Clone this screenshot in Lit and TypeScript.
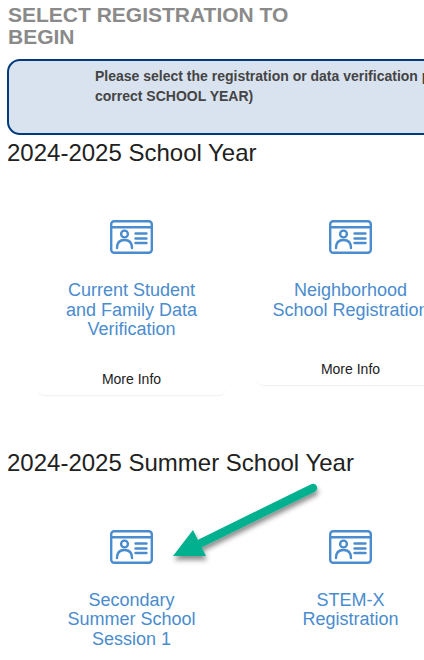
import { LitElement, html, css, svg } from "lit";
import { customElement } from "lit/decorators.js";

const idIcon = html`<svg class="icon" viewBox="0 0 43 34" fill="none" stroke="#4a8cce" stroke-width="2.4" stroke-linecap="round">
  ${svg`<rect x="1.2" y="1.2" width="40.6" height="31.6" rx="3"/>
  <path d="M1.2 7.2H41.8"/>
  <circle cx="14.5" cy="14" r="3.4"/>
  <path d="M7 28c0-5.5 3.2-8 7.5-8s7.5 2.5 7.5 8"/>
  <path d="M25.5 13.5H36.5M25.5 18.5H36.5M25.5 23H36.5"/>`}
</svg>`;

const card = (title: unknown) => html`<div class="card">
  ${idIcon}
  <div class="name">${title}</div>
  <div class="more">More Info</div>
</div>`;

@customElement("app-root")
export class AppRoot extends LitElement {
  static styles = css`
    :host {
      display: block;
      position: relative;
      width: 424px;
      height: 660px;
      overflow: hidden;
      background: #fff;
      font-family: "Liberation Sans", Arial, sans-serif;
      color: #212121;
    }
    .page { width: 480px; padding: 4px 0 0 7px; box-sizing: border-box; }
    .title {
      width: 300px;
      margin: 0 0 0 1px;
      font-size: 21px;
      line-height: 22px;
      font-weight: 700;
      color: #8a8a8a;
    }
    .alert {
      box-sizing: border-box;
      width: 560px;
      height: 76px;
      margin-top: 11px;
      padding: 5px 0 0 86px;
      border: 2px solid #003a7d;
      border-radius: 13px;
      background: #d9e3f0;
      font-size: 14px;
      line-height: 20px;
      font-weight: 700;
      color: #444;
    }
    h2 { margin: 3px 0 0; font-size: 24px; line-height: 30px; font-weight: 400; }
    .cards {
      display: flex;
      align-items: flex-start;
      gap: 30px;
      margin: 33px 0 0 30px;
    }
    .card {
      flex: 0 0 189px;
      box-sizing: border-box;
      display: flex;
      flex-direction: column;
      align-items: center;
      padding: 19px 0 7px;
      border-radius: 8px;
      background: #fff;
      box-shadow: 0 2px 2px -1px rgba(0, 0, 0, 0.07);
      text-align: center;
    }
    .icon { display: block; width: 43px; height: 34px; }
    .name {
      margin-top: 27px;
      min-height: 49px;
      width: 158px;
      font-size: 18px;
      line-height: 19.5px;
      color: #4a8cce;
    }
    .more { margin-top: 30px; font-size: 14px; line-height: 18px; color: #212121; }
    .next { margin-top: 53px; }
    .arrow { position: absolute; left: 165px; top: 478px; width: 165px; height: 95px; }
  `;

  render() {
    return html`<div class="page">
        <h1 class="title">SELECT REGISTRATION TO BEGIN</h1>
        <div class="alert">Please select the registration or data verification process for the<br />correct SCHOOL YEAR)</div>
        <h2>2024-2025 School Year</h2>
        <div class="cards">
          ${card("Current Student and Family Data Verification")}
          ${card("Neighborhood School Registration")}
        </div>
        <h2 class="next">2024-2025 Summer School Year</h2>
        <div class="cards">
          ${card(html`Secondary<br />Summer School Session 1`)}
          ${card("STEM-X Registration")}
        </div>
      </div>
      <svg class="arrow" viewBox="0 0 165 95">
        <defs><filter id="s" x="-20%" y="-20%" width="140%" height="150%"><feDropShadow dx="1" dy="4" stdDeviation="2.5" flood-color="#000" flood-opacity="0.45"/></filter></defs>
        <g filter="url(#s)" fill="#06b08e">
          <path d="M148 10L36 65" stroke="#06b08e" stroke-width="8.5" stroke-linecap="round" fill="none"/>
          <path d="M8 78L28 52L41 78Z"/>
        </g>
      </svg>`;
  }
}
